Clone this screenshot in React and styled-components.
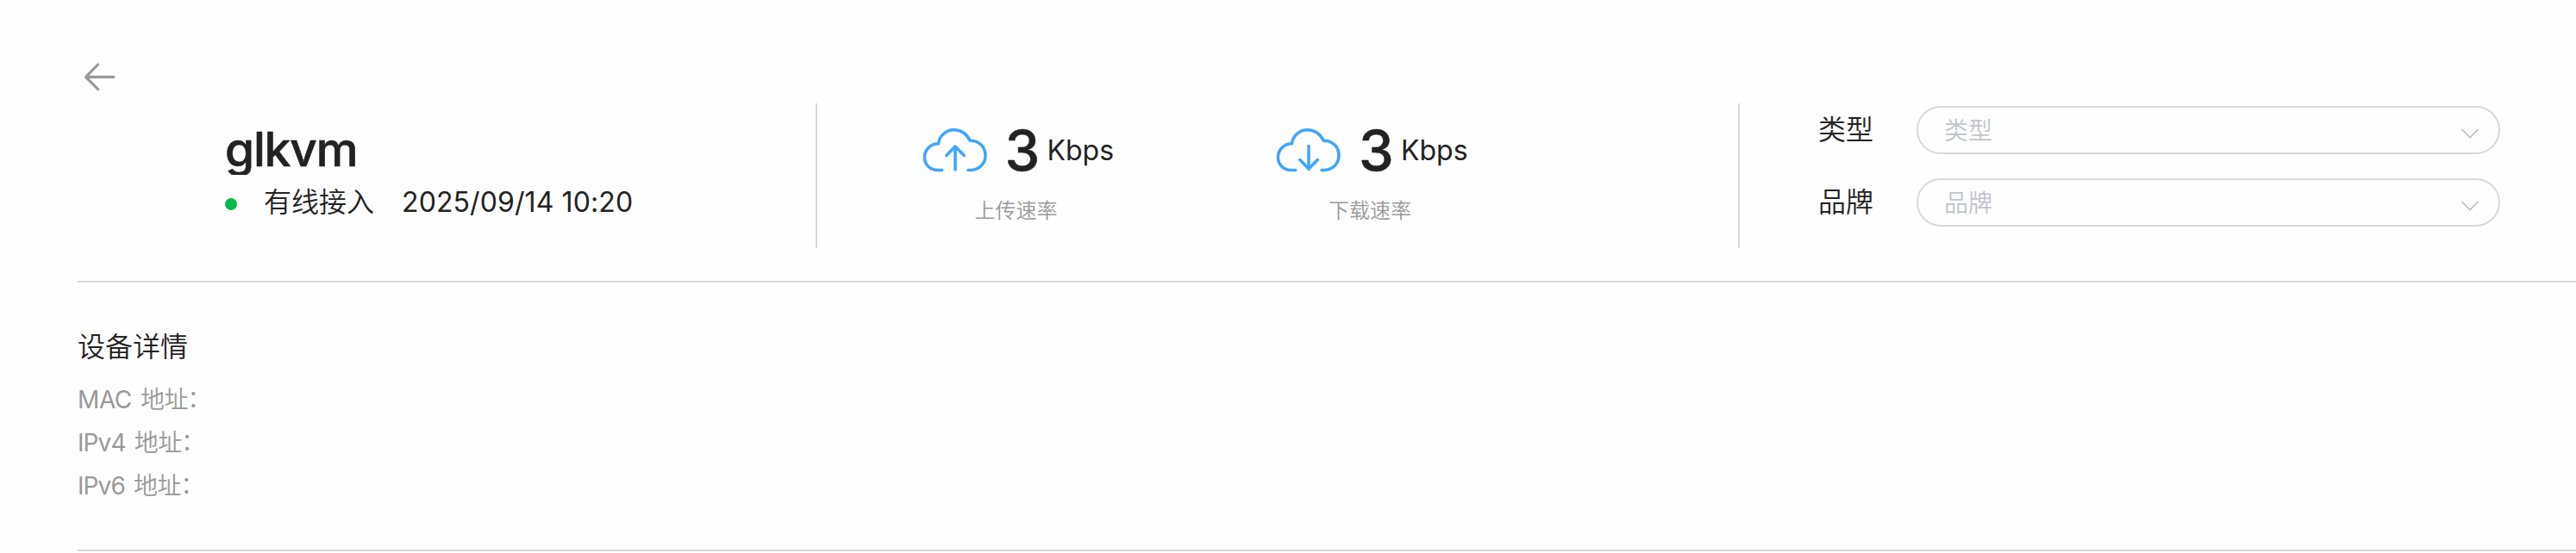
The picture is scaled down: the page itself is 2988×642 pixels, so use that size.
import React from "react";
import styled, { createGlobalStyle } from "styled-components";

const Global = createGlobalStyle`
  * { box-sizing: border-box; }
  body {
    margin: 0;
    background: #fefefe;
    color: #222;
    font-family: Inter, "Noto Sans CJK SC", sans-serif;
    font-weight: 350;
    overflow: hidden;
  }
`;

const Page = styled.main`
  height: 642px;
  padding-left: 90px;
  display: flex;
  flex-direction: column;
  overflow: hidden;
`;

const Header = styled.header`
  height: 328px;
  flex: none;
  display: flex;
  border-bottom: 2px solid #d8d8d8;
`;

const BackButton = styled.button`
  width: 52px;
  height: 52px;
  margin: 63px 0 0;
  padding: 0;
  border: 0;
  background: none;
  flex: none;
`;

const Device = styled.section`
  width: 804px;
  flex: none;
  padding: 149px 0 0 119px;
`;

const DeviceName = styled.h1`
  margin: 0 0 0 0;
  height: 54px;
  overflow: hidden;
  font-size: 55px;
  line-height: 49px;
  font-weight: 500;
  letter-spacing: -1.2px;
  -webkit-text-stroke: 0.6px #222;
`;

const Status = styled.div`
  display: flex;
  align-items: center;
  height: 64px;
  font-size: 32px;
  line-height: 64px;
  white-space: nowrap;
`;

const Dot = styled.span`
  width: 14px;
  height: 14px;
  margin: 4px 31px 0 0;
  border-radius: 50%;
  background: #07ba49;
`;

const Time = styled.time`
  margin-left: 32px;
  font-weight: 400;
  letter-spacing: 0.1px;
`;

const Divider = styled.div`
  width: 2px;
  height: 168px;
  margin-top: 120px;
  flex: none;
  background: #d8d8d8;
`;

const Rates = styled.section`
  width: 1068px;
  flex: none;
  display: flex;
  padding: 144px 0 0 121.5px;
`;

const Rate = styled.div`
  width: 410.5px;
  flex: none;
`;

const RateRow = styled.div`
  display: flex;
  height: 62px;
  line-height: 61px;
`;

const RateValue = styled.strong`
  width: 38px;
  margin-left: 20px;
  font-size: 65px;
  font-weight: 500;
  letter-spacing: -2px;
  -webkit-text-stroke: 0.5px #222;
`;

const RateUnit = styled.span`
  margin-left: 11px;
  font-size: 32px;
  font-weight: 400;
`;

const RateCaption = styled.div`
  margin: 19px 0 0 61px;
  font-size: 24px;
  line-height: 40px;
  color: #999;
`;

const Filters = styled.section`
  flex: none;
  display: flex;
  flex-direction: column;
  gap: 28px;
  padding: 123px 0 0 91px;
`;

const Field = styled.label`
  display: flex;
  height: 56px;
  font-size: 32px;
  line-height: 55px;
`;

const FieldName = styled.span`
  width: 114px;
`;

const Select = styled.div`
  width: 677px;
  height: 56px;
  padding: 3px 22px 0 30px;
  display: flex;
  align-items: center;
  justify-content: space-between;
  border: 2px solid #d8d8d8;
  border-radius: 28px;
  color: #c0c4cc;
  font-size: 28px;
`;

const Details = styled.section`
  height: 312px;
  flex: none;
  padding-top: 49px;
  border-bottom: 2px solid #d8d8d8;
`;

const DetailsTitle = styled.h2`
  margin: 0 0 10px;
  font-size: 32px;
  line-height: 52px;
  font-weight: 350;
`;

const DetailLine = styled.p`
  margin: 0;
  display: flex;
  height: 50px;
  font-size: 28px;
  line-height: 50px;
  color: #999;
`;

const Protocol = styled.span`
  font-weight: 400;
  letter-spacing: ${(p) => p.$tracking}px;
  margin-right: 10px;
`;

const Label = styled.span`
  letter-spacing: -0.3px;
`;

const Colon = styled.span`
  margin: -1px 0 0 -1px;
`;

const CloudIcon = ({ down }) => (
  <svg width="76" height="62" viewBox="0 0 76 62" fill="none" stroke="#3fa4ff" strokeWidth="3.5" strokeLinecap="round" strokeLinejoin="round">
    <path d="M22.7 49.5H17.5C9 49.5 2.4 43 2.4 34.5C2.4 26 9.5 18.7 18.5 18.7C19.5 10 27 2.8 36.7 2.8C45 2.8 52 8 55 15.2C65.5 15 73 22.5 73 32.5C73 42 65.5 49.5 56 49.5H53" transform="translate(0 4)" />
    <path d={down ? "M38 25.5V52.5M27.8 41.5L38 52L48.3 41.5" : "M38 53V26M27.8 36.5L38 26L48.3 36.5"} />
  </svg>
);

const Arrow = () => (
  <svg width="52" height="52" viewBox="0 0 52 52" fill="none" stroke="#999" strokeWidth="3.2" strokeLinecap="round" strokeLinejoin="round">
    <path d="M42 26.3H9.5M23.5 12L9.5 26.3L23.5 40.5" />
  </svg>
);

const Chevron = () => (
  <svg width="22" height="14" viewBox="0 0 22 14" fill="none" stroke="#c0c4cc" strokeWidth="1.8">
    <path d="M1.3 1.8L11 11.7L20.7 1.8" />
  </svg>
);

const ChevronSlot = styled.span`
  display: flex;
  margin-top: 5px;
`;

const rates = [
  { caption: "上传速率", value: 3, down: false },
  { caption: "下载速率", value: 3, down: true },
];

const addresses = [
  { name: "MAC", tracking: -0.4 },
  { name: "IPv4", tracking: -0.9 },
  { name: "IPv6", tracking: -0.9 },
];

export default function App() {
  return (
    <>
      <Global />
      <Page>
        <Header>
          <BackButton aria-label="返回"><Arrow /></BackButton>
          <Device>
            <DeviceName>glkvm</DeviceName>
            <Status>
              <Dot />
              <span>有线接入</span>
              <Time>2025/09/14 10:20</Time>
            </Status>
          </Device>
          <Divider />
          <Rates>
            {rates.map((r) => (
              <Rate key={r.caption}>
                <RateRow>
                  <CloudIcon down={r.down} />
                  <RateValue>{r.value}</RateValue>
                  <RateUnit>Kbps</RateUnit>
                </RateRow>
                <RateCaption>{r.caption}</RateCaption>
              </Rate>
            ))}
          </Rates>
          <Divider />
          <Filters>
            {["类型", "品牌"].map((name) => (
              <Field key={name}>
                <FieldName>{name}</FieldName>
                <Select>
                  <span>{name}</span>
                  <ChevronSlot><Chevron /></ChevronSlot>
                </Select>
              </Field>
            ))}
          </Filters>
        </Header>
        <Details>
          <DetailsTitle>设备详情</DetailsTitle>
          {addresses.map((a) => (
            <DetailLine key={a.name}>
              <Protocol $tracking={a.tracking}>{a.name}</Protocol>
              <Label>地址</Label>
              <Colon>：</Colon>
            </DetailLine>
          ))}
        </Details>
      </Page>
    </>
  );
}
